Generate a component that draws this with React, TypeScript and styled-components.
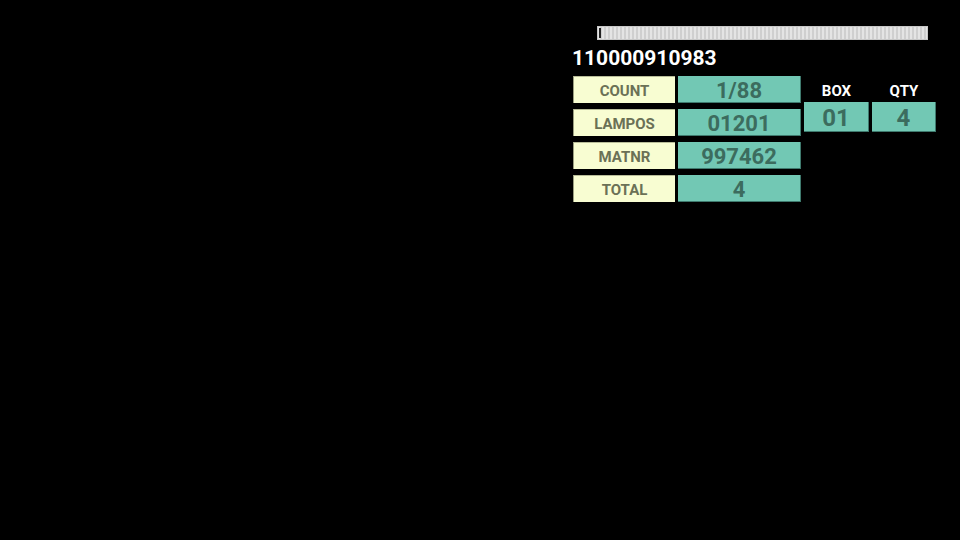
import React from "react";
import styled, { createGlobalStyle } from "styled-components";

const Global = createGlobalStyle`
  html, body { margin: 0; padding: 0; background: #000; }
  body { font-family: Roboto, "Liberation Sans", sans-serif; }
  #root { min-height: 540px; }
`;

const Page = styled.div`
  width: 960px;
  height: 540px;
  background: #000;
  display: flex;
  justify-content: flex-end;
  box-sizing: border-box;
  padding: 26px 24px 0 0;
`;

const Panel = styled.div`
  width: 364px;
  display: flex;
  flex-direction: column;
`;

const Progress = styled.div`
  margin-left: 25px;
  width: 331px;
  height: 14px;
  box-sizing: border-box;
  border: 1px solid #c8c8c8;
  background: repeating-linear-gradient(
    90deg,
    #e4e4e4 0px,
    #e4e4e4 2px,
    #cfcfcf 2px,
    #cfcfcf 4px
  );
  display: flex;
  align-items: stretch;
`;

const Tick = styled.div`
  width: 2px;
  margin: 1px 0 1px 1px;
  background: #222;
`;

const Title = styled.div`
  color: #fff;
  font-weight: 700;
  font-size: 21px;
  line-height: 24px;
  margin-top: 6px;
`;

const Body = styled.div`
  display: flex;
  gap: 3px;
  margin-top: 6px;
  margin-left: 1px;
`;

const Table = styled.div`
  display: grid;
  grid-template-columns: 102px 123px;
  grid-auto-rows: 27px;
  column-gap: 3px;
  row-gap: 6px;
`;

const Label = styled.div`
  box-sizing: border-box;
  background: #f8fdd2;
  border-left: 1px solid #9a9e80;
  border-top: 1px solid #b8bc98;
  color: #6b7156;
  font-weight: 700;
  font-size: 15px;
  display: flex;
  align-items: center;
  justify-content: center;
  padding-top: 2px;
`;

const Value = styled.div<{ $size?: number }>`
  box-sizing: border-box;
  background: #72c8b4;
  border-right: 1px solid #3f7a6e;
  border-bottom: 1px solid #3f7a6e;
  color: #3c6c5e;
  font-weight: 700;
  font-size: ${(p) => p.$size ?? 22}px;
  display: flex;
  align-items: center;
  justify-content: center;
  padding-top: 3px;
`;

const BoxArea = styled.div`
  display: grid;
  grid-template-columns: 65px 64px;
  grid-template-rows: 26px 30px;
  column-gap: 3px;
`;

const BoxHead = styled.div`
  color: #fff;
  font-weight: 700;
  font-size: 15px;
  display: flex;
  align-items: center;
  justify-content: center;
  padding-top: 4px;
`;

const rows: [string, string][] = [
  ["COUNT", "1/88"],
  ["LAMPOS", "01201"],
  ["MATNR", "997462"],
  ["TOTAL", "4"],
];

export default function App() {
  return (
    <>
      <Global />
      <Page>
        <Panel>
          <Progress>
            <Tick />
          </Progress>
          <Title>110000910983</Title>
          <Body>
            <Table>
              {rows.map(([l, v]) => (
                <React.Fragment key={l}>
                  <Label>{l}</Label>
                  <Value>{v}</Value>
                </React.Fragment>
              ))}
            </Table>
            <BoxArea>
              <BoxHead>BOX</BoxHead>
              <BoxHead>QTY</BoxHead>
              <Value $size={24}>01</Value>
              <Value $size={24}>4</Value>
            </BoxArea>
          </Body>
        </Panel>
      </Page>
    </>
  );
}
